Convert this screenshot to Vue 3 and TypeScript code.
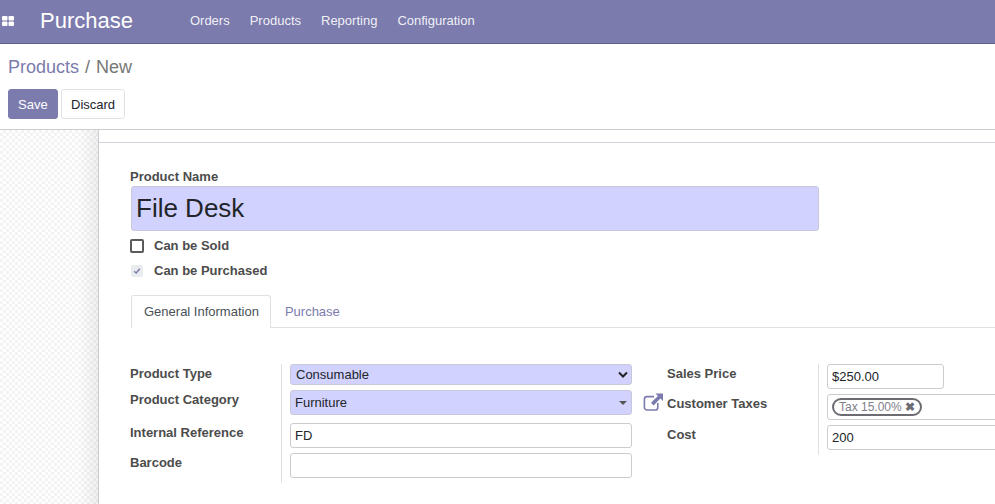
<template>
  <div class="app">
    <nav class="navbar">
      <svg class="apps" width="14" height="12" viewBox="0 0 14 12">
        <rect x="1" y="1" width="5.5" height="4.5" rx="1" />
        <rect x="7.5" y="1" width="5.5" height="4.5" rx="1" />
        <rect x="1" y="6.5" width="5.5" height="4.5" rx="1" />
        <rect x="7.5" y="6.5" width="5.5" height="4.5" rx="1" />
      </svg>
      <span class="brand">Purchase</span>
      <a v-for="m in menus" :key="m" class="menu">{{ m }}</a>
    </nav>

    <header class="control">
      <div class="crumbs"><span class="link">Products</span><span class="sep">/</span><span>New</span></div>
      <div class="buttons">
        <button class="btn primary">Save</button>
        <button class="btn">Discard</button>
      </div>
    </header>

    <main class="content">
      <div class="backdrop"></div>
      <div class="sheet">
        <div class="sheet-top"></div>
        <div class="sheet-body">
          <label class="name-label">Product Name</label>
          <div class="name-input">File Desk</div>

          <div class="check-row">
            <span class="check"></span>
            <span class="check-label">Can be Sold</span>
          </div>
          <div class="check-row second">
            <span class="check disabled">
              <svg width="8" height="8" viewBox="0 0 8 8"><path d="M1.2 4.2 3.2 6 6.8 1.8" fill="none" stroke="#7c7bad" stroke-width="1.5" /></svg>
            </span>
            <span class="check-label">Can be Purchased</span>
          </div>

          <div class="tabs">
            <div class="tab active">General Information</div>
            <div class="tab">Purchase</div>
          </div>

          <div class="groups">
            <div class="group left">
              <div class="label">Product Type</div>
              <div class="field">
                <div class="select req">
                  <span>Consumable</span>
                  <svg width="10" height="8" viewBox="0 0 10 8"><path d="M1 1.5 5 5.5 9 1.5" fill="none" stroke="#222" stroke-width="2" /></svg>
                </div>
              </div>
              <div class="label">Product Category</div>
              <div class="field">
                <div class="select req tall">
                  <span>Furniture</span>
                  <i class="caret"></i>
                </div>
              </div>
              <div class="label">Internal Reference</div>
              <div class="field"><div class="input">FD</div></div>
              <div class="label">Barcode</div>
              <div class="field"><div class="input"></div></div>
            </div>

            <div class="group right">
              <div class="label">Sales Price</div>
              <div class="field"><div class="input price">$250.00</div></div>
              <div class="label has-icon">
                <svg class="ext" width="21" height="18" viewBox="0 0 21 18">
                  <path d="M11 3.6H4a2.6 2.6 0 0 0-2.6 2.6v8.2A2.6 2.6 0 0 0 4 17h8.2a2.6 2.6 0 0 0 2.6-2.6V10" fill="none" stroke="#7c7bad" stroke-width="1.6" />
                  <path d="M12.5 0.5H20V8L17.4 5.6 10.6 12.4 8 9.8 14.9 3Z" fill="#7c7bad" />
                </svg>
                Customer Taxes
              </div>
              <div class="field">
                <div class="input taxes">
                  <span class="tag">Tax 15.00%<b>✖</b></span>
                </div>
              </div>
              <div class="label">Cost</div>
              <div class="field"><div class="input">200</div></div>
            </div>
          </div>
        </div>
      </div>
    </main>
  </div>
</template>

<script setup lang="ts">
const menus: string[] = ["Orders", "Products", "Reporting", "Configuration"];
</script>

<style>
html,
body {
  margin: 0;
  overflow: hidden;
}
</style>

<style scoped>
.app {
  width: 995px;
  height: 504px;
  overflow: hidden;
  display: flex;
  flex-direction: column;
  font-family: "Liberation Sans", Arial, sans-serif;
  font-size: 13px;
  color: #4c4c4c;
  background: #fff;
}

.navbar {
  height: 44px;
  box-sizing: border-box;
  padding-bottom: 2px;
  flex: none;
  display: flex;
  align-items: center;
  background: #7c7bad;
  border-bottom: 1px solid #5f5e97;
  color: #fff;
}

.apps {
  fill: #fff;
  margin-left: 1px;
}

.brand {
  font-size: 22px;
  margin-left: 25px;
  margin-right: 57px;
}

.menu {
  margin-right: 20px;
  color: rgba(255, 255, 255, 0.9);
}

.control {
  height: 86px;
  flex: none;
  box-sizing: border-box;
  padding: 12px 8px 0;
  border-bottom: 1px solid #ccc;
}

.crumbs {
  font-size: 18px;
  line-height: 22px;
  color: #777;
  display: flex;
  gap: 6px;
}

.link {
  color: #7c7bad;
}

.buttons {
  display: flex;
  gap: 3px;
  margin-top: 11px;
}

.btn {
  height: 30px;
  box-sizing: border-box;
  padding: 0 9px;
  font: inherit;
  color: #212529;
  background: #fff;
  border: 1px solid #dee2e6;
  border-radius: 3px;
}

.btn.primary {
  width: 50px;
  padding: 0 10px 0 9px;
  color: #fff;
  background: #7c7bad;
  border-color: #7c7bad;
}

.content {
  flex: 1;
  display: flex;
  min-height: 0;
}

.backdrop {
  width: 98px;
  flex: none;
  border-right: 1px solid #c9ccd2;
  background:
    linear-gradient(to right, rgba(0, 0, 0, 0) 80%, rgba(0, 0, 0, 0.06)),
    repeating-conic-gradient(#f3f3f3 0 25%, #fff 0 50%) 0 0 / 6px 6px;
}

.sheet {
  flex: 1;
  min-width: 0;
}

.sheet-top {
  height: 12px;
  border-bottom: 1px solid #ced4da;
}

.sheet-body {
  padding: 26px 0 0 31px;
}

.name-label,
.label,
.check-label {
  font-weight: 700;
  color: #4c4c4c;
}

.name-label {
  display: block;
  line-height: 15px;
}

.name-input {
  width: 688px;
  height: 45px;
  box-sizing: border-box;
  margin: 2px 0 0 1px;
  padding-left: 4px;
  font-size: 26px;
  line-height: 43px;
  color: #212529;
  background: #d2d2ff;
  border: 1px solid #c8c8d8;
  border-radius: 3px;
}

.check-row {
  display: flex;
  align-items: center;
  height: 15px;
  margin-top: 7px;
}

.check-row.second {
  margin-top: 10px;
}

.check {
  width: 10px;
  height: 10px;
  margin: 1px 10px 0 0;
  flex: none;
  border: 2px solid #5a5a5a;
  border-radius: 2px;
  display: flex;
  align-items: center;
  justify-content: center;
}

.check.disabled {
  margin: 0 11px 0 1px;
  border: 1px solid #e9ecef;
  background: #e9ecef;
}

.tabs {
  display: flex;
  height: 32px;
  margin: 17px 0 0 1px;
  border-bottom: 1px solid #dee2e6;
}

.tab {
  height: 32px;
  box-sizing: border-box;
  padding: 0 13px;
  line-height: 32px;
  color: #7c7bad;
  border: 1px solid transparent;
  border-bottom: 0;
}

.tab.active {
  height: 33px;
  padding: 0 11px 0 12px;
  color: #495057;
  background: #fff;
  border-color: #dee2e6;
  border-radius: 3px 3px 0 0;
}

.groups {
  display: flex;
  align-items: flex-start;
  margin-top: 36px;
}

.group {
  display: grid;
}

.group.left {
  width: 502px;
  grid-template-columns: 151px 351px;
  grid-template-rows: 26px 33px 30px 30px;
  margin-right: 35px;
}

.group.right {
  grid-template-columns: 151px 200px;
  grid-template-rows: 30px 31px 30px;
}

.label {
  line-height: 19px;
}

.has-icon {
  position: relative;
}

.ext {
  position: absolute;
  left: -24px;
  top: -1px;
}

.field {
  padding-left: 8px;
  border-left: 1px solid #dee2e6;
}

.select,
.input {
  box-sizing: border-box;
  width: 342px;
  border-radius: 3px;
  color: #212529;
}

.select {
  height: 21px;
  display: flex;
  align-items: center;
  justify-content: space-between;
  padding: 0 3px 0 5px;
  background: #d2d2ff;
  border: 1px solid #c8c8d8;
}

.select.tall {
  height: 25px;
  padding: 0 4px;
}

.caret {
  width: 0;
  height: 0;
  border-left: 4px solid transparent;
  border-right: 4px solid transparent;
  border-top: 4px solid #555;
}

.input {
  height: 25px;
  padding: 0 4px;
  line-height: 24px;
  background: #fff;
  border: 1px solid #ccc;
}

.right .input {
  width: 200px;
}

.right .input.price {
  width: 117px;
}

.input.taxes {
  height: 26px;
  display: flex;
  align-items: center;
}

.tag {
  display: inline-flex;
  align-items: center;
  height: 18px;
  box-sizing: border-box;
  padding: 0 5px;
  font-size: 12px;
  color: #80808a;
  border: 2px solid #6c6c72;
  border-radius: 9px;
}

.tag b {
  margin-left: 3px;
  font-size: 12px;
  color: #6c6c72;
}
</style>
